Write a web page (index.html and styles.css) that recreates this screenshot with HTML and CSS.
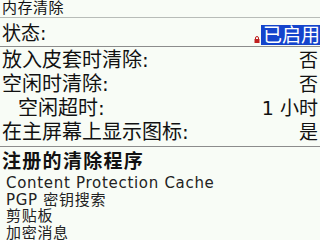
FILE: index.html
```html
<!DOCTYPE html>
<html>
<head>
<meta charset="utf-8">
<link rel="stylesheet" href="styles.css">
</head>
<body>
<div class="screen">
  <div class="title">内存清除</div>
  <div class="status">
    <span class="label">状态:</span>
    <span class="status-val">
      <svg class="lock" width="6" height="7" viewBox="0 0 6 7"><path d="M1.5 3V2a1.5 1.5 0 0 1 3 0v1" fill="none" stroke="#c02020" stroke-width="1"/><rect x="0.5" y="3" width="5" height="4" fill="#c02020"/></svg>
      <span class="sel">已启用</span>
    </span>
  </div>
  <div class="options">
    <div class="row"><span class="label">放入皮套时清除:</span><span class="val">否</span></div>
    <div class="row"><span class="label">空闲时清除:</span><span class="val">否</span></div>
    <div class="row"><span class="label indent">空闲超时:</span><span class="val">1 小时</span></div>
    <div class="row"><span class="label">在主屏幕上显示图标:</span><span class="val">是</span></div>
  </div>
  <div class="heading">注册的清除程序</div>
  <div class="list">
    <div class="item latin">Content Protection Cache</div>
    <div class="item">PGP 密钥搜索</div>
    <div class="item">剪贴板</div>
    <div class="item">加密消息</div>
  </div>
</div>
</body>
</html>
```
FILE: styles.css
```css
html, body {
  margin: 0;
  padding: 0;
  background: #f8fcf6;
}
.screen {
  width: 320px;
  height: 240px;
  overflow: hidden;
  font-family: "DejaVu Sans", "Noto Sans CJK SC", sans-serif;
  color: #111;
  background: #f8fcf6;
}
.title {
  height: 17px;
  line-height: 17px;
  font-size: 15px;
  padding-left: 2px;
  border-bottom: 1px solid #b8bcb8;
  letter-spacing: 0.5px;
}
.status {
  height: 28px;
  display: flex;
  justify-content: space-between;
  align-items: flex-end;
  border-bottom: 1px solid #8c8c8c;
  font-size: 19px;
}
.status .label {
  padding-left: 2px;
  line-height: 24px;
  padding-bottom: 1px;
}
.status-val {
  display: flex;
  align-items: flex-end;
  gap: 1px;
  padding-bottom: 1px;
}
.lock {
  margin-bottom: 2px;
}
.sel {
  background: #1444cc;
  color: #fff;
  height: 20px;
  line-height: 20px;
  padding: 0 0 0 2px;
  font-size: 19px;
}
.options {
  padding-top: 1px;
  border-bottom: 1px solid #8c8c8c;
  padding-bottom: 2px;
}
.row {
  height: 24px;
  line-height: 24px;
  display: flex;
  justify-content: space-between;
  font-size: 20px;
}
.row .label {
  padding-left: 2px;
}
.row .label.indent {
  padding-left: 18px;
}
.row .val {
  padding-right: 2px;
  font-size: 19px;
}
.heading {
  font-weight: bold;
  font-size: 19px;
  line-height: 24px;
  height: 26px;
  padding-left: 2px;
  padding-top: 2px;
  letter-spacing: 1.3px;
}
.list {
  padding-left: 6px;
  color: #222;
}
.item {
  font-size: 15px;
  letter-spacing: 0.7px;
  height: 16.5px;
  line-height: 16.5px;
}
.item.latin {
  font-size: 15px;
  letter-spacing: 0.7px;
}
```
